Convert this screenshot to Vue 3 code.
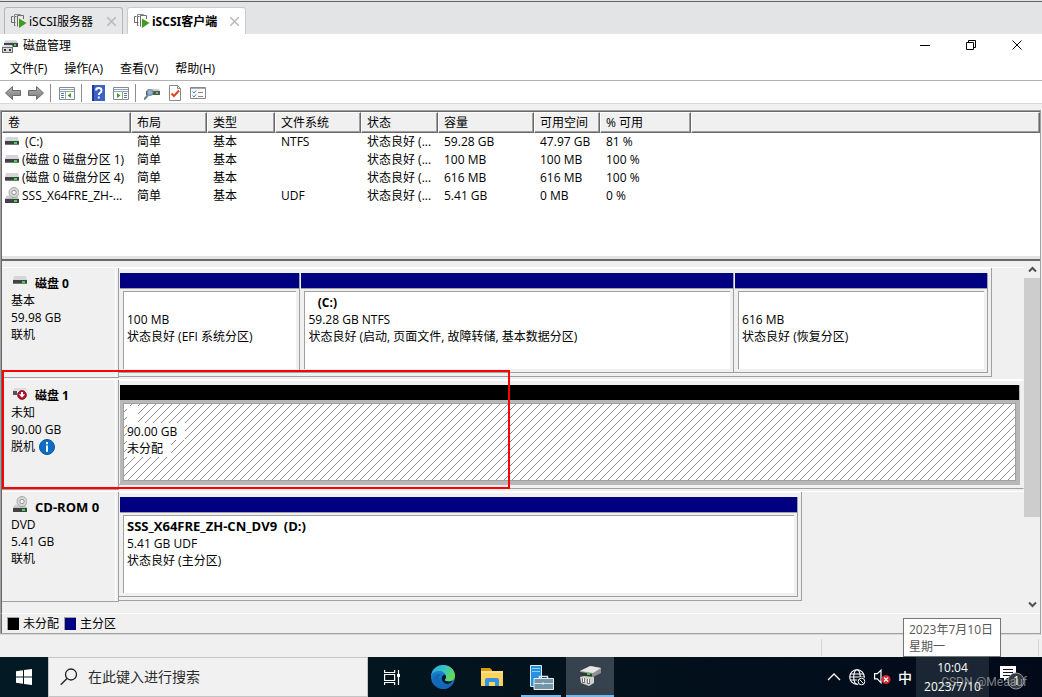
<script setup>
const tabs = [
  { name: 'iSCSI服务器', active: false },
  { name: 'iSCSI客户端', active: true }
]
const menus = ['文件(F)', '操作(A)', '查看(V)', '帮助(H)']
const columns = ['卷', '布局', '类型', '文件系统', '状态', '容量', '可用空间', '% 可用', '']
const volumes = [
  { icon: 'drive', cells: ['\u00a0(C:)', '简单', '基本', 'NTFS', '状态良好 (...', '59.28 GB', '47.97 GB', '81 %', ''] },
  { icon: 'drive', cells: ['(磁盘 0 磁盘分区 1)', '简单', '基本', '', '状态良好 (...', '100 MB', '100 MB', '100 %', ''] },
  { icon: 'drive', cells: ['(磁盘 0 磁盘分区 4)', '简单', '基本', '', '状态良好 (...', '616 MB', '616 MB', '100 %', ''] },
  { icon: 'cd', cells: ['SSS_X64FRE_ZH-...', '简单', '基本', 'UDF', '状态良好 (...', '5.41 GB', '0 MB', '0 %', ''] }
]
const disks = [
  {
    name: '磁盘 0', icon: 'drive', lines: ['基本', '59.98 GB', '联机'], width: 96.5,
    parts: [
      { share: 180, title: '', lines: ['100 MB', '状态良好 (EFI 系统分区)'] },
      { share: 433, title: '\u00a0\u00a0\u00a0(C:)', lines: ['59.28 GB NTFS', '状态良好 (启动, 页面文件, 故障转储, 基本数据分区)'] },
      { share: 253, title: '', lines: ['616 MB', '状态良好 (恢复分区)'] }
    ]
  },
  {
    name: '磁盘 1', icon: 'offline', lines: ['未知', '90.00 GB', '脱机'], info: true, width: 100,
    parts: [{ share: 1, free: true, title: '', lines: ['90.00 GB', '未分配'] }]
  },
  {
    name: 'CD-ROM 0', icon: 'cd', lines: ['DVD', '5.41 GB', '联机'], width: 75.5, large: true,
    parts: [{ share: 1, title: 'SSS_X64FRE_ZH-CN_DV9\u00a0\u00a0(D:)', lines: ['5.41 GB UDF', '状态良好 (主分区)'] }]
  }
]
</script>

<template>
  <div class="screen">
    <svg class="defs" width="0" height="0" aria-hidden="true">
      <defs>
        <linearGradient id="lid" x1="0" y1="0" x2="0" y2="1">
          <stop offset="0" stop-color="#e6e6e8" /><stop offset="1" stop-color="#b9babd" />
        </linearGradient>
        <linearGradient id="arrow" x1="0" y1="0" x2="0" y2="1">
          <stop offset="0" stop-color="#b0b0b0" /><stop offset="1" stop-color="#7c7c7c" />
        </linearGradient>
        <linearGradient id="edgeTop" x1="0" y1="0" x2="1" y2="0.4">
          <stop offset="0" stop-color="#2aa7dc" /><stop offset="0.55" stop-color="#35c3c4" /><stop offset="1" stop-color="#62d957" />
        </linearGradient>
        <linearGradient id="edgeBody" x1="0" y1="0" x2="0" y2="1">
          <stop offset="0" stop-color="#1b8fd8" /><stop offset="1" stop-color="#0f5fb0" />
        </linearGradient>
        <symbol id="drive" viewBox="0 0 14 16">
          <path d="M1 4h12l1 4H0z" fill="#d5d6d9" />
          <rect y="8" width="14" height="4" fill="#3f4347" /><rect y="11" width="14" height="1" fill="#777" />
          <rect x="9" y="9" width="3" height="2" fill="#3ddc3a" />
        </symbol>
        <symbol id="cd" viewBox="0 0 14 16">
          <path d="M2 8h10l2 4H0z" fill="url(#lid)" />
          <rect y="12" width="14" height="4" fill="#3f4347" /><rect x="9" y="13" width="3" height="2" fill="#3ddc3a" />
          <circle cx="9" cy="5.500" r="5" fill="#d9d9d9" stroke="#9a9a9a" stroke-width="0.800" />
          <circle cx="9" cy="5.500" r="2.200" fill="#f4f4f4" stroke="#8b8b8b" stroke-width="0.900" />
        </symbol>
        <symbol id="offline" viewBox="0 0 14 16">
          <path d="M1 4h12l1 3H0z" fill="#dcdcde" /><rect y="7" width="4" height="4" fill="#555" />
          <circle cx="9" cy="11" r="4.400" fill="#b3122a" stroke="#84091c" stroke-width="0.800" />
          <path d="M8 8h2v2.300h2L9 13.800 6 10.300h2z" fill="#fff" />
        </symbol>
        <symbol id="vm" viewBox="0 0 16 16">
          <path d="M4.500 9.500h-4v-6h2M4.500 12.500h-1v-9h2M6.500 13.500v-11h6v3.500" fill="none" stroke="#6c6c6c" />
          <path d="M3.500 3.500v-2h6v1" fill="none" stroke="#8a8a8a" />
          <path d="M8 5.500 15.500 10 8 15z" fill="#3f9c1d" />
        </symbol>
      </defs>
    </svg>

    <nav class="tabs">
      <div v-for="t in tabs" :key="t.name" class="tab" :class="{ active: t.active }">
        <svg width="16" height="16"><use href="#vm" /></svg>
        <span class="tab-name">{{ t.name }}</span>
        <button class="tab-close" aria-label="关闭标签">
          <svg width="9" height="9"><path d="M0 0 9 9M9 0 0 9" stroke="#b8b8b8" stroke-width="1.500" /></svg>
        </button>
      </div>
    </nav>

    <header class="titlebar">
      <svg width="16" height="16">
        <path d="M3 2h11l2 4H2z" fill="url(#lid)" /><rect x="2" y="5" width="14" height="4" fill="#414548" />
        <rect x="12" y="6" width="2" height="2" fill="#3ddc3a" />
        <path d="M1 7h9l1 2H0z" fill="#e0e0e0" /><rect y="9" width="11" height="6" fill="#6b6e70" />
        <rect x="1" y="10" width="9" height="4" fill="#d7d7d7" /><path d="M2 11h2v2H2zM7 11h2v2H7z" fill="#333" />
      </svg>
      <h1>磁盘管理</h1>
      <div class="controls">
        <button aria-label="最小化"><svg width="11" height="11"><path d="M0 5.500h10" stroke="#000" /></svg></button>
        <button aria-label="还原"><svg width="11" height="11"><path d="M.5 2.500h7v7h-7zM2.500 2.500v-2h7v7h-2" fill="none" stroke="#000" /></svg></button>
        <button aria-label="关闭"><svg width="11" height="11"><path d="M.5.500l9 9M9.500.500l-9 9" stroke="#000" /></svg></button>
      </div>
    </header>

    <nav class="menu"><button v-for="m in menus" :key="m">{{ m }}</button></nav>

    <div class="toolbar">
      <button aria-label="后退"><svg width="16" height="16"><path d="M.5 8 7.500 1.500v4h8v5h-8v4z" fill="url(#arrow)" stroke="#6b6b6b" /></svg></button>
      <button aria-label="前进"><svg width="16" height="16"><path d="M15.500 8 8.500 1.500v4h-8v5h8v4z" fill="url(#arrow)" stroke="#6b6b6b" /></svg></button>
      <i class="sep"></i>
      <button aria-label="控制台树">
        <svg width="16" height="16"><path d="M.5 2.500h15v12H.5z" fill="#fff" stroke="#7f8b96" /><path d="M1 4.500h14M1 6.500h14M6.500 7v8" stroke="#93a0ac" />
          <path d="M2 8.500h3M2 10.500h3M2 12.500h3" stroke="#5c7fa8" /><path d="M12 8v5L8.500 10.500z" fill="#3ca021" /></svg>
      </button>
      <i class="sep"></i>
      <button aria-label="帮助">
        <svg width="16" height="16"><rect x="2" width="13" height="16" fill="#3b63c4" /><rect x="2" width="2" height="16" fill="#1d3b91" />
          <path d="M6 5.500Q6 3 8.700 3T11.500 5.400Q11.500 7 10 7.800 8.800 8.400 8.800 10M8.800 11.500v2" fill="none" stroke="#fff" stroke-width="1.900" /></svg>
      </button>
      <button aria-label="操作窗格">
        <svg width="16" height="16"><path d="M.5 2.500h15v12H.5z" fill="#fff" stroke="#7f8b96" /><path d="M1 4.500h14M1 6.500h14M9.500 7v8" stroke="#93a0ac" />
          <path d="M11 8.500h3M11 10.500h3M11 12.500h3" stroke="#5c7fa8" /><path d="M4 8v5l3.500-2.500z" fill="#3ca021" /></svg>
      </button>
      <i class="sep"></i>
      <button aria-label="刷新">
        <svg width="16" height="16"><path d="M3 4h12l1 3H2z" fill="#c9cacc" /><rect x="2" y="6" width="14" height="4" fill="#55595d" /><rect x="12" y="7" width="2" height="2" fill="#3ddc3a" />
          <circle cx="6" cy="7.500" r="3" fill="#8fb4cc" stroke="#6e8799" /><path d="M4 10 0 14.500" stroke="#6a8090" stroke-width="2" /></svg>
      </button>
      <button aria-label="属性">
        <svg width="16" height="16"><path d="M2.500.500h8l3 3v12h-11z" fill="#fff" stroke="#8a8a8a" /><path d="M10.500.500v3h3" fill="none" stroke="#8a8a8a" />
          <path d="M4.500 8.500 7 11l5-5.500" fill="none" stroke="#e2481d" stroke-width="2" /></svg>
      </button>
      <button aria-label="任务列表">
        <svg width="16" height="16"><path d="M.5 2.500h15v11H.5z" fill="#fff" stroke="#85898e" /><path d="M1 3.500h14" stroke="#a9adb2" />
          <path d="M2.500 6.500 4 8l2-2.500M2.500 10.500 4 12l2-2.500" fill="none" stroke="#3482cc" /><path d="M8 7.500h5M8 11.500h5" stroke="#8a8a8a" /></svg>
      </button>
    </div>

    <main class="work">
      <section class="volumes">
        <table>
          <colgroup>
            <col class="c-vol" /><col class="c-layout" /><col class="c-type" /><col class="c-fs" /><col class="c-state" />
            <col class="c-size" /><col class="c-free" /><col class="c-pct" /><col />
          </colgroup>
          <thead><tr><th v-for="(c, i) in columns" :key="i">{{ c }}</th></tr></thead>
          <tbody>
            <tr v-for="(v, r) in volumes" :key="r">
              <td v-for="(c, i) in v.cells" :key="i">
                <svg v-if="i === 0" width="14" height="16"><use :href="'#' + v.icon" /></svg>{{ c }}
              </td>
            </tr>
          </tbody>
        </table>
      </section>

      <section class="graphic">
        <div class="disks">
          <article v-for="d in disks" :key="d.name" class="disk" :class="{ large: d.large }">
            <div class="label">
              <h2><svg width="14" height="16"><use :href="'#' + d.icon" /></svg>{{ d.name }}</h2>
              <p v-for="l in d.lines.slice(0, 2)" :key="l">{{ l }}</p>
              <p class="status-line">{{ d.lines[2] }}
                <svg v-if="d.info" width="16" height="16"><circle cx="8" cy="8" r="7.500" fill="#0d6cc4" stroke="#07559d" /><path d="M8 3v2.200M8 6.500v6.200" stroke="#fff" stroke-width="2" /></svg>
              </p>
            </div>
            <div class="track">
              <div class="graph" :class="{ full: d.width === 100 }" :style="{ width: d.width + '%' }">
                <div v-for="(p, i) in d.parts" :key="i" class="part" :class="{ free: p.free }" :style="{ flexGrow: p.share }">
                  <div class="stripe"></div>
                  <div class="box">
                    <svg v-if="p.free" class="hatch" width="100%" height="100%" shape-rendering="crispEdges">
                      <pattern id="hatch" width="8" height="8" patternUnits="userSpaceOnUse"><path d="M0 7h1v1H0zM1 6h1v1H1zM2 5h1v1H2zM3 4h1v1H3zM4 3h1v1H4zM5 2h1v1H5zM6 1h1v1H6zM7 0h1v1H7z" fill="#8f8f8f" /></pattern>
                      <rect width="100%" height="100%" fill="url(#hatch)" />
                    </svg>
                    <p class="part-title"><span>{{ p.title || '\u00a0' }}</span></p>
                    <p v-for="l in p.lines" :key="l"><span>{{ l }}</span></p>
                  </div>
                </div>
              </div>
            </div>
          </article>
        </div>
        <div class="scroll">
          <button aria-label="向上滚动"><svg width="9" height="7"><path d="M1 5.500 4.500 2 8 5.500" fill="none" stroke="#505050" stroke-width="2" /></svg></button>
          <div class="rail"><div class="thumb"></div></div>
          <button aria-label="向下滚动"><svg width="9" height="7"><path d="M1 1.500 4.500 5 8 1.500" fill="none" stroke="#505050" stroke-width="2" /></svg></button>
        </div>
        <div class="highlight"></div>
      </section>

      <footer class="legend">
        <i class="swatch black"></i><span>未分配</span><i class="swatch navy"></i><span>主分区</span>
      </footer>
    </main>
    <div class="statusbar"><i></i><i></i><i></i></div>

    <footer class="taskbar">
      <button class="start" aria-label="开始">
        <svg width="16" height="16"><path d="M0 2.200 7 1.200v6.300H0zM8 1l8-1v7.500H8zM0 8.500h7v6.300l-7-1zM8 8.500h8V16l-8-1.100z" fill="#fff" /></svg>
      </button>
      <label class="search">
        <svg width="18" height="18"><circle cx="11" cy="6.500" r="5.500" fill="none" stroke="#222" stroke-width="1.300" /><path d="M7 10.500.700 16.800" stroke="#222" stroke-width="1.300" /></svg>
        <input type="text" placeholder="在此键入进行搜索" aria-label="搜索" />
      </label>
      <button class="app view" aria-label="任务视图">
        <svg width="17" height="17"><path d="M.6 1v2.500h10V1M.6 16v-2.500h10V16M.6 5.500h10v6H.6zM14.500 1v15" fill="none" stroke="#fff" stroke-width="1.200" /><rect x="13" y="5" width="3" height="3" fill="#fff" /></svg>
      </button>
      <button class="app" aria-label="Edge">
        <svg width="24" height="24" viewBox="0 0 24 24"><circle cx="12" cy="12" r="12" fill="url(#edgeBody)" />
          <path d="M0 11C1 4 6 0 12 0c7 0 12 5 12 10.500 0 4-3 6-6.500 6-2.500 0-4-1-3.600-2 .9-1 1.300-2 1.100-3.300C14.500 8 11.500 6 8 6 4 6 1 8 0 11z" fill="url(#edgeTop)" />
          <path d="M9.500 9.500C7 12 7.500 17 11 20c3 2.500 7.500 2 11-1.500-2 3.500-6 5.500-10 5.500C4 23 1 16 4 11c1.500-2 4-2.500 5.500-1.500z" fill="#1267b8" />
          <path d="M15 11.200c.2 1.300-.2 2.300-1.100 3.300-.4 1 1.100 2 3.600 2 1.500 0 3-.4 4.200-1.200-1.700 3.700-6.200 4.700-9 2.200-2.700-2.300-2.500-6.500.6-8 .8.400 1.500 1 1.700 1.700z" fill="#04182b" /></svg>
      </button>
      <button class="app" aria-label="文件资源管理器">
        <svg width="22" height="19"><path d="M0 0h9l2 2v4H0z" fill="#d99a0b" /><path d="M0 3h22v15H0z" fill="#ffd45e" /><path d="M0 3h22v2H0z" fill="#ffe08a" />
          <path d="M4 18v-6q0-2 2-2h10q2 0 2 2v6h-4v-4H8v4z" fill="#3594e0" /></svg>
      </button>
      <button class="app running" aria-label="服务器管理器">
        <svg width="25" height="25"><path d="M1.500.500h11v21h-11z" fill="#2592e0" stroke="#d6ecfa" /><path d="M3 3.500h8M3 6.500h8" stroke="#8fcbf2" />
          <path d="M10.500 13.500v-2h8v2" fill="none" stroke="#dfe8ee" stroke-width="1.500" /><path d="M5 13.500h19.500v11H5z" fill="#7395a8" stroke="#e4eef3" /><path d="M5 18.500h19M14 17v3" stroke="#d7e4eb" /></svg>
      </button>
      <button class="app current" aria-label="磁盘管理">
        <svg width="23" height="22"><path d="M1 6 12 1l10 2v5l-8 4-13-3z" fill="#8f9090" /><path d="M1 6 11 1l11 2-8 5z" fill="#e6e6e4" /><path d="M1 7l12 2v3L1 10z" fill="#33383b" /><rect x="8" y="8" width="3" height="2" fill="#39c736" />
          <path d="M1 12l4-1 10 1v6l-5 3-8-3z" fill="#cfcfcc" /><path d="M3 13h3v5H3zM8 14h3v5H8z" fill="#777" /><path d="M4 13h1v4H4zM9 14h1v4H9z" fill="#fff" /></svg>
      </button>
      <div class="tray">
        <svg width="14" height="8"><path d="M1 7 7 1l6 6" fill="none" stroke="#fff" stroke-width="1.300" /></svg>
        <svg width="17" height="17"><g fill="none" stroke="#fff" stroke-width="1.100"><circle cx="8" cy="8" r="7.300" /><ellipse cx="8" cy="8" rx="3.300" ry="7.300" /><path d="M1.500 5h13M1.500 11h7M.7 8h14.600" /></g>
          <circle cx="12.500" cy="12.500" r="4.500" fill="#020e1a" /><circle cx="12.500" cy="12.500" r="3.300" fill="none" stroke="#fff" /><path d="M10.500 10.500l4 4" stroke="#fff" /></svg>
        <svg width="17" height="16"><path d="M.6 4.600h2.700L7 1.200v12.600L3.300 9.900H.600z" fill="none" stroke="#fff" stroke-width="1.200" />
          <circle cx="12" cy="10.500" r="4.500" fill="#d8262f" /><path d="M10 8.500l4 4M14 8.500l-4 4" stroke="#fff" stroke-width="1.200" /></svg>
        <span class="ime">中</span>
      </div>
      <button class="clock"><span>10:04</span><span>2023/7/10</span></button>
      <button class="notify" aria-label="通知">
        <svg width="28" height="26"><path d="M0 2h16v12H7l-3 3v-3H0z" fill="#fff" /><path d="M3 5.500h10M3 8.500h10M3 11.500h7" stroke="#0a1420" stroke-width="1.200" />
          <circle cx="16" cy="17" r="8" fill="#343a40" stroke="#8d9297" /><text x="13" y="21">1</text></svg>
      </button>
      <div class="tooltip">2023年7月10日<br />星期一</div>
      <span class="watermark">CSDN @Meaauf</span>
    </footer>
  </div>
</template>

<style>
body { margin: 0; }
</style>

<style scoped>
.screen { display: flex; flex-direction: column; min-height: 100vh; background: #f0f0f0; color: #000; font: 12px/17px "Open Sans", "Noto Sans CJK SC", sans-serif; white-space: nowrap; overflow: hidden; }
* { box-sizing: border-box; }
.defs { position: absolute; }
svg { display: block; flex: none; }
button { display: flex; align-items: center; justify-content: center; padding: 0; border: 0; background: none; font: inherit; color: inherit; }
h1, h2, p { margin: 0; font: inherit; }

.tabs { display: flex; align-items: flex-end; gap: 4px; height: 34px; padding: 0 4px; background: #e3e4e5; border-top: 1px solid #e3e4e5; box-shadow: inset 0 1px #636363; }
.tab { display: flex; align-items: center; width: 119px; height: 27px; padding: 0 6px; border: 1px solid #b4b7b9; border-bottom: 0; border-radius: 3px 3px 0 0; background: #e6e7e8; font-family: "Noto Sans", "Noto Sans CJK SC", sans-serif; }
.tab.active { background: #fff; border-color: #c9cbcc; font-weight: 700; }
.tab-name { margin-left: 2px; }
.tab-close { margin-left: auto; }

.titlebar { display: flex; align-items: center; height: 23px; padding-left: 2px; background: #fff; }
.titlebar h1 { margin-left: 5px; }
.controls { display: flex; margin-left: auto; padding-right: 2px; }
.controls button { width: 46px; height: 21px; }
.menu { display: flex; gap: 17px; height: 24px; padding-left: 10px; background: #fff; border-bottom: 1px solid #b2b2b2; }
.toolbar { display: flex; align-items: center; height: 23px; padding: 2px 0 0 1px; background: #fff; border-bottom: 1px solid #d9d9d9; }
.toolbar button { width: 23px; height: 20px; }
.sep { width: 1px; height: 18px; margin: 0 4px 0 3px; background: #8d8d8d; }

.work { display: flex; flex-direction: column; flex: 1; margin: 6px 1px 0 0; border: 1px solid #a0a0a0; }
.volumes { height: 150px; border-top: 1px solid #696969; border-left: 1px solid #696969; border-bottom: 2px solid #696969; background: #fff; box-shadow: inset 0 -3px #e3e3e3; }
table { width: 100%; table-layout: fixed; border-collapse: separate; border-spacing: 0; }
.c-vol { width: 129px; } .c-layout { width: 76px; } .c-type { width: 68px; } .c-fs { width: 86px; } .c-state { width: 77px; }
.c-size { width: 96px; } .c-free { width: 66px; } .c-pct { width: 91px; }
th { height: 21px; padding: 0 0 0 5px; background: #f0f0f0; border: 1px solid #fff; border-right-color: #696969; border-bottom-color: #696969; box-shadow: inset -1px -1px #a0a0a0; font-weight: 400; text-align: left; line-height: 18px; }
td { height: 18px; padding: 0 0 0 6px; line-height: 18px; overflow: hidden; }
td:first-child { display: flex; align-items: center; gap: 3px; padding-left: 3px; }
td svg { margin-bottom: 2px; }

.graphic { position: relative; display: flex; flex: 1; min-height: 352px; border-left: 1px solid #696969; }
.disks { flex: 1; min-width: 0; padding-top: 6px; }
.disk { display: flex; height: 112px; border-top: 1px solid #fff; }
.label { width: 117px; height: 110px; flex: none; padding: 7px 0 0 9px; border-right: 1px solid #a0a0a0; border-bottom: 1px solid #a0a0a0; box-shadow: inset -2px 0 #f0f0f0, inset -3px 0 #fff; }
.label h2 { display: flex; gap: 8px; height: 17px; padding-left: 2px; font-weight: 700; }
.label h2 svg { margin-top: -3px; }
.large h2, .large .part-title { font-size: 13px; }
.status-line { display: flex; align-items: center; gap: 4px; }
.track { flex: 1; min-width: 0; }
.graph { display: flex; height: 109px; padding: 5px 3px 3px 0; border: solid #a0a0a0; border-width: 0 1px 1px 0; box-shadow: inset 0 1px #fff; }
.graph.full { border-right-color: transparent; }
.part { display: flex; flex-direction: column; flex-basis: 0; min-width: 0; padding-left: 1px; border: solid #a0a0a0; border-width: 0 1px 1px 0; }
.stripe { height: 16px; background: #000080; border-bottom: 1px solid #a0a0a0; }
.free .stripe { background: #000; }
.box { position: relative; flex: 1; margin: 2px 3px 3px; padding: 2px 3px; border: solid #a0a0a0; border-width: 1px 0 0 1px; background: #fff; overflow: hidden; }
.box p { position: relative; height: 17px; }
.part-title { font-weight: 700; }
.free { border-color: #b8b8b8; }
.free .box { border: 1px solid #a0a0a0; outline: 3px solid #b8b8b8; }
.free .stripe { position: relative; }
.free .box span { display: inline-block; height: 17px; padding-right: 8px; background: #fff; }
.hatch { position: absolute; inset: 0; }
.highlight { position: absolute; left: 0; top: 109px; width: 508px; height: 119px; border: 2px solid #f00; }
.scroll { display: flex; flex-direction: column; width: 16px; background: #f0f0f0; }
.scroll button { height: 17px; }
.rail { flex: 1; }
.thumb { height: 75%; background: #cdcdcd; }

.legend { display: flex; align-items: center; height: 20px; padding-left: 5px; border-top: 1px solid #fff; border-left: 1px solid #696969; }
.swatch { width: 12px; height: 13px; border: solid #a0a0a0; border-width: 1px 0 0 1px; }
.black { background: #000; } .navy { background: #000080; }
.legend span { margin: 0 5px 0 4px; }
.statusbar { display: grid; grid-template-columns: 1fr 92px 125px; height: 23px; padding: 4px 3px 1px; border-top: 1px solid #dadada; }
.statusbar i { border-right: 1px solid #d4d4d4; }

.taskbar { position: relative; display: flex; height: 40px; background: linear-gradient(90deg, #031a24, #03131d 50%, #020a1a); color: #fff; }
.start { width: 48px; }
.search { display: flex; align-items: center; width: 320px; padding: 0 11px; gap: 10px; border: 1px solid #c4c4c4; background: #f1f1f1; }
.search input { flex: 1; min-width: 0; padding: 0; border: 0; outline: 0; background: none; font: 14px/20px "Open Sans", "Noto Sans CJK SC", sans-serif; }
.search input::placeholder { color: #2b2b2b; opacity: 1; }
.app { width: 48px; margin-right: 1px; }
.view { margin-right: 3px; }
.running { background: linear-gradient(#76b9ed, #76b9ed) 50% 100% / 40px 2px no-repeat; }
.current { background: #36434e; border-bottom: 2px solid #76b9ed; }
.tray { display: flex; align-items: center; gap: 8px; margin-left: auto; padding-right: 4px; }
.ime { margin-left: -1px; font-size: 14px; font-weight: 500; }
.clock { flex-direction: column; width: 73px; background: #1b2634; line-height: 19px; }
.notify { width: 53px; padding-right: 3px; }
.notify text { fill: #fff; font-size: 12px; }
.tooltip { position: absolute; right: 41px; bottom: 40px; width: 98px; height: 39px; padding: 2px 5px; border: 1px solid #767676; background: #fff; color: #575757; }
.watermark { position: absolute; right: 15px; bottom: 6px; color: rgba(205, 205, 205, .6); font-family: Roboto, sans-serif; }
</style>
